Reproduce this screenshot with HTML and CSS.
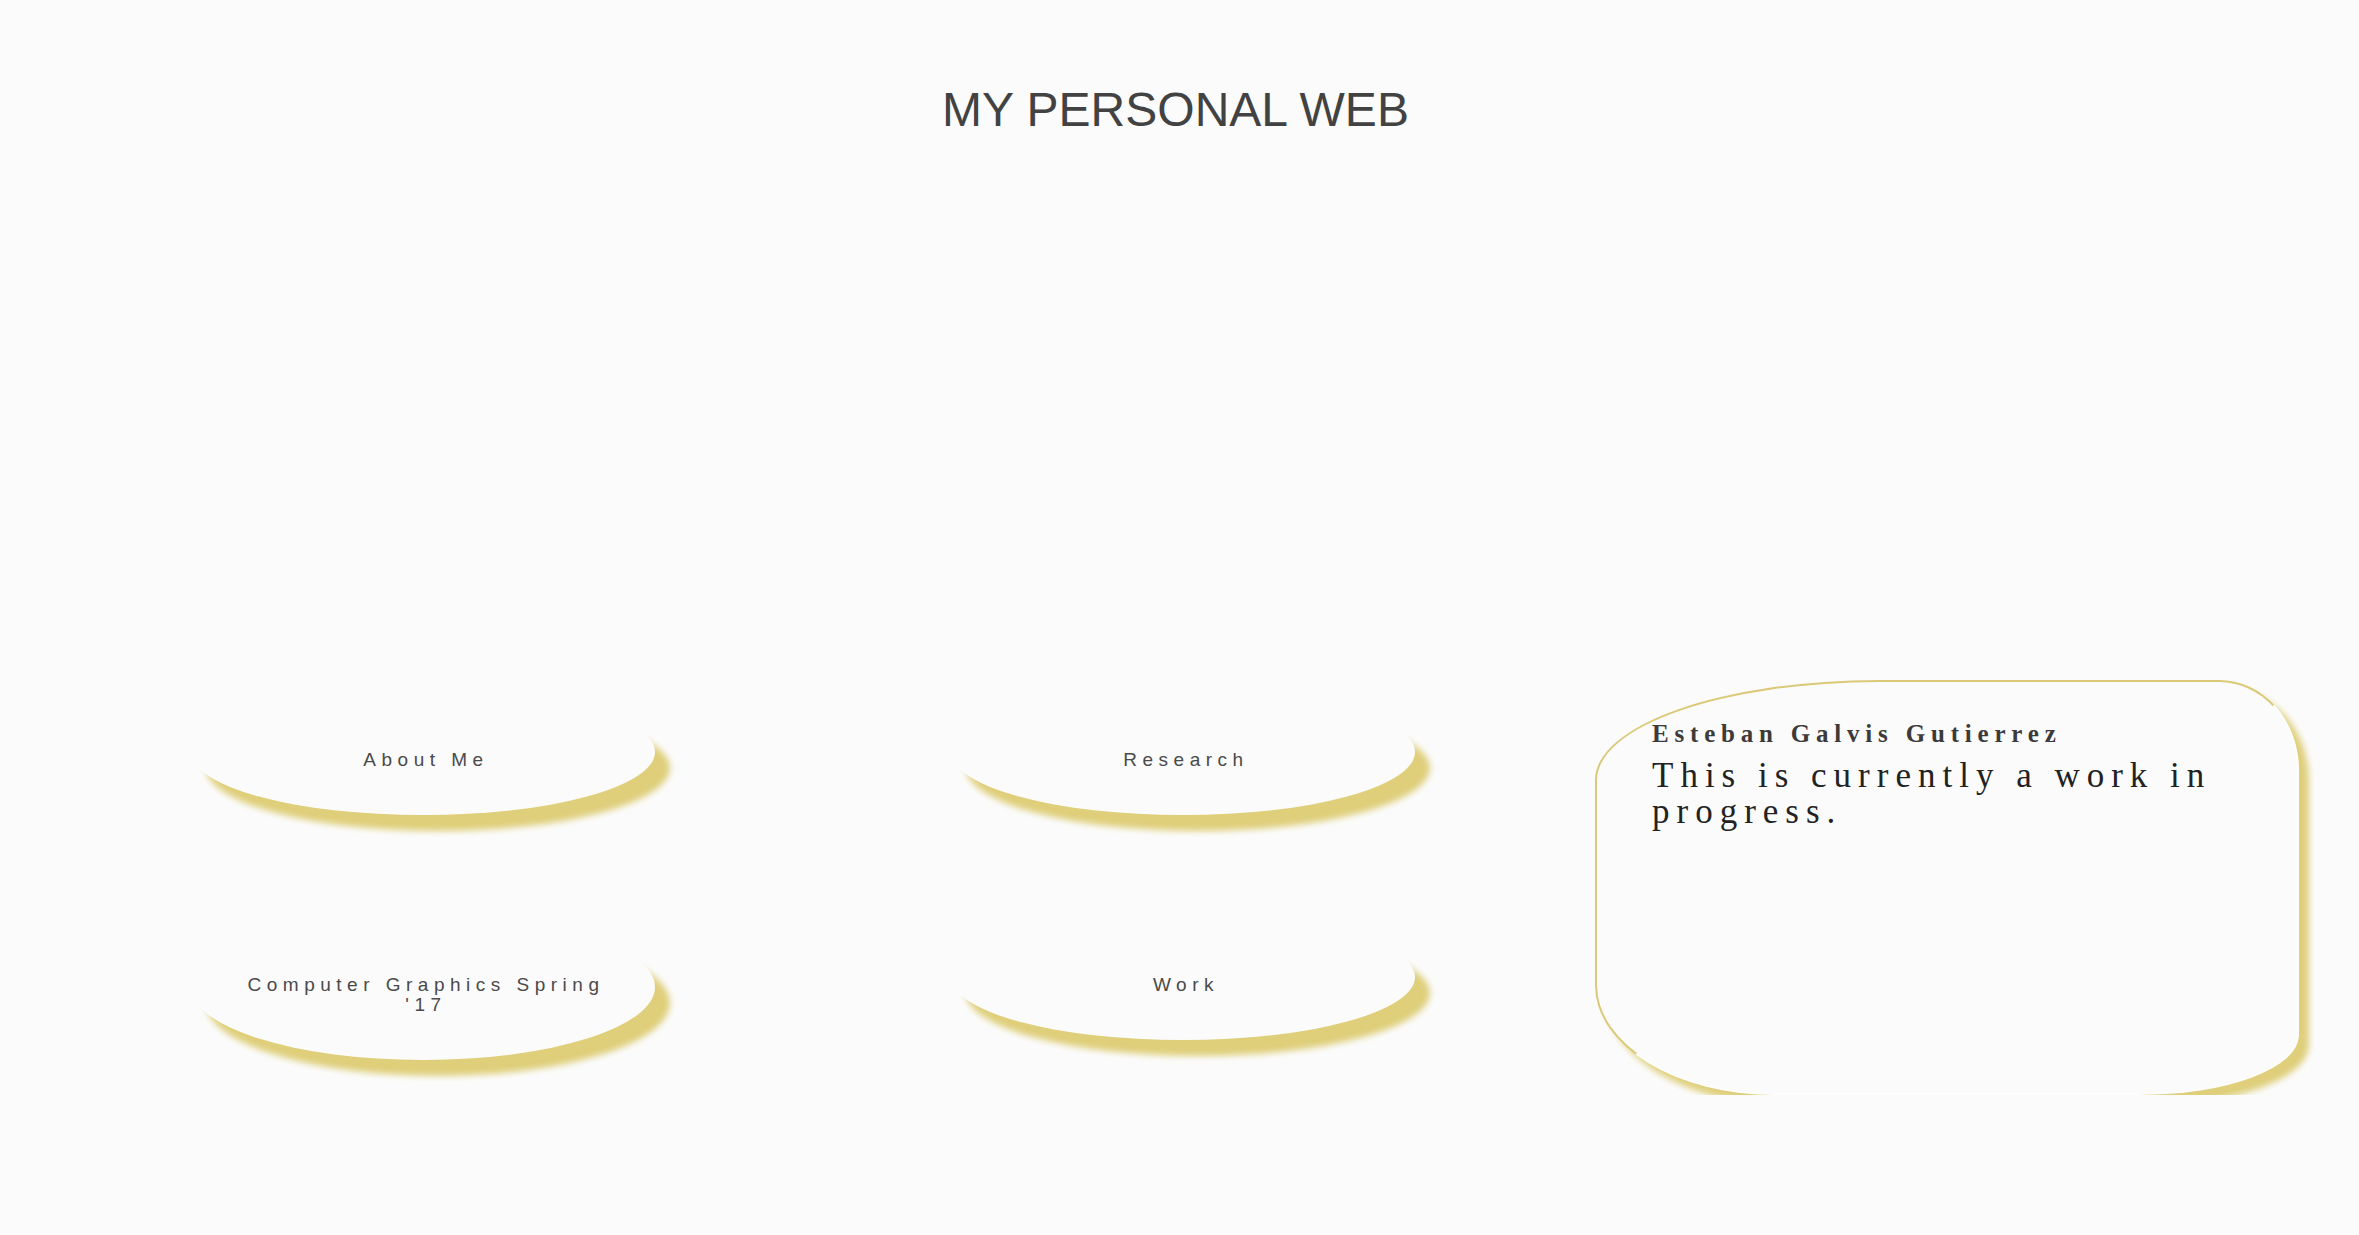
FILE: index.html
```html
<!DOCTYPE html>
<html lang="en">
<head>
<meta charset="utf-8">
<title>My Personal Web</title>
<link rel="stylesheet" href="styles.css">
</head>
<body>
  <header class="site-header">
    <h1 class="site-title">MY PERSONAL WEB</h1>
  </header>
  <main class="main">
    <nav class="nav-grid">
      <a class="nav-btn" href="#about">About Me</a>
      <a class="nav-btn" href="#research">Research</a>
      <a class="nav-btn" href="#cg">Computer Graphics Spring '17</a>
      <a class="nav-btn" href="#work">Work</a>
    </nav>
    <section class="card-col">
      <article class="card">
        <h2 class="card-name">Esteban Galvis Gutierrez</h2>
        <p class="card-text">This is currently a work in progress.</p>
      </article>
    </section>
  </main>
</body>
</html>
```
FILE: styles.css
```css
html {
  background: #fbfbfb;
}

body {
  margin: 0;
  font-family: "Liberation Sans", Arial, sans-serif;
  color: #444;
}

.site-header {
  padding-top: 82px;
  text-align: center;
}

.site-title {
  margin: 0;
  padding-right: 8px;
  font-size: 48px;
  font-weight: normal;
  line-height: 55px;
  color: #424242;
}

.main {
  display: flex;
  align-items: flex-start;
  margin-top: 543px;
  padding-left: 43px;
}

.nav-grid {
  display: grid;
  grid-template-columns: 760px 760px;
  row-gap: 99px;
  align-items: start;
  justify-items: center;
  padding-top: 9px;
}

.nav-btn {
  display: block;
  width: 464px;
  box-sizing: border-box;
  padding: 61px 37px 45px 43px;
  border-radius: 50%;
  background: #fbfbfb;
  box-shadow: 15px 16px 6px #dfcf7b;
  text-align: center;
  text-decoration: none;
  font-size: 19px;
  line-height: 20px;
  letter-spacing: 5.5px;
  color: #4a4a4a;
}

.card-col {
  width: 760px;
}

.card {
  width: 704px;
  height: 415px;
  box-sizing: border-box;
  margin-left: 32px;
  padding: 37px 45px 0 55px;
  background: #fbfbfb;
  border: 2px solid;
  border-color: #dac978 #fdfdfd #fdfdfd #dac978;
  border-radius: 285px 80px 160px 180px / 100px 90px 60px 110px;
  box-shadow: 10px 10px 6px #dfcf7b;
}

.card-name {
  margin: 0;
  font-family: "Liberation Serif", "Times New Roman", serif;
  font-size: 25px;
  font-weight: bold;
  line-height: 30px;
  letter-spacing: 5.8px;
  color: #3d3a3a;
}

.card-text {
  margin: 9px 0 0;
  font-family: "Liberation Serif", "Times New Roman", serif;
  font-size: 35px;
  line-height: 36px;
  letter-spacing: 7px;
  color: #222;
}
```
